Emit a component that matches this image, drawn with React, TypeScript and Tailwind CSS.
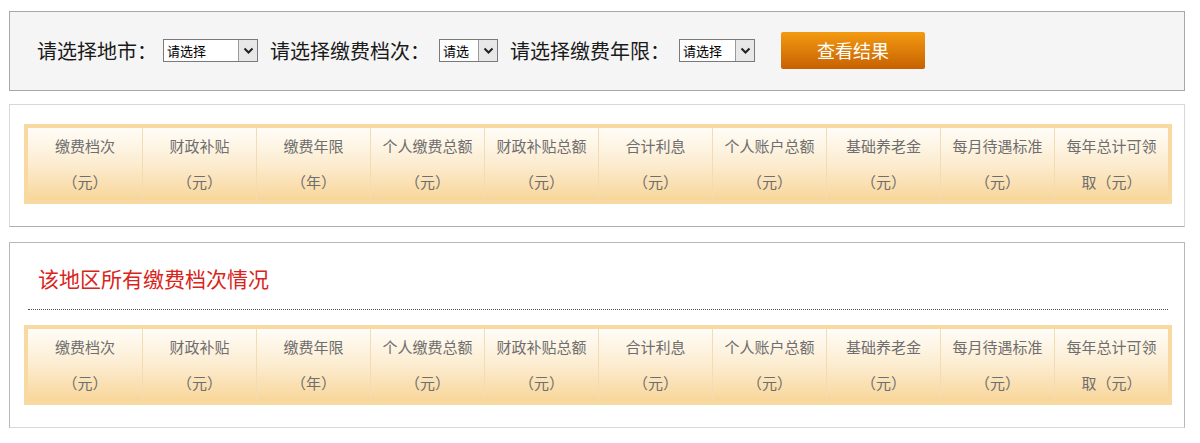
import React from "react";

const font = { fontFamily: '"Noto Sans CJK SC", "Noto Sans", sans-serif' };

function FakeSelect({ w, text }: { w: string; text: string }) {
  return (
    <div className={`${w} h-[23px] flex border border-[#7a7a7a] bg-white`}>
      <div className="flex-1 overflow-hidden whitespace-nowrap pl-[3px] text-[13px] leading-[21px] text-black">{text}</div>
      <div className="w-[19px] h-full border-l border-[#9a9a9a] bg-[#e8e8e8] flex items-center justify-center">
        <svg width="11" height="8" viewBox="0 0 11 8">
          <path d="M1.5 1.5 L5.5 5.5 L9.5 1.5" stroke="#222" strokeWidth="2" fill="none" />
        </svg>
      </div>
    </div>
  );
}

const cols: [string, string][] = [
  ["缴费档次", "（元）"],
  ["财政补贴", "（元）"],
  ["缴费年限", "（年）"],
  ["个人缴费总额", "（元）"],
  ["财政补贴总额", "（元）"],
  ["合计利息", "（元）"],
  ["个人账户总额", "（元）"],
  ["基础养老金", "（元）"],
  ["每月待遇标准", "（元）"],
  ["每年总计可领", "取（元）"],
];

function HeaderTable() {
  return (
    <div className="w-[1148px] border-4 border-[#f8d9a1] flex">
      {cols.map(([a, b], i) => (
        <div
          key={i}
          className={`w-[114px] h-[72px] bg-gradient-to-b from-[#fffdf8] via-[#fcecd0] to-[#f8d699] text-center text-[15px] leading-[36px] text-[#6e6e6e] ${
            i > 0 ? "border-l border-[#f3dcb4]" : ""
          }`}
        >
          <div className="whitespace-nowrap">{a}</div>
          <div className="whitespace-nowrap">{b}</div>
        </div>
      ))}
    </div>
  );
}

export default function App() {
  return (
    <div className="w-[1200px] h-[443px] bg-white overflow-hidden" style={font}>
      <div className="ml-[9px] mt-[11px] w-[1176px] h-[80px] border border-[#a8a8a8] bg-[#f5f5f5] flex items-center pl-[27px] pb-[1px]">
        <span className="text-[20px] text-[#1a1a1a] whitespace-nowrap">请选择地市：</span>
        <div className="ml-[6px]">
          <FakeSelect w="w-[95px]" text="请选择" />
        </div>
        <span className="ml-[12px] text-[20px] text-[#1a1a1a] whitespace-nowrap">请选择缴费档次：</span>
        <div className="ml-[9px]">
          <FakeSelect w="w-[59px]" text="请选" />
        </div>
        <span className="ml-[12px] text-[20px] text-[#1a1a1a] whitespace-nowrap">请选择缴费年限：</span>
        <div className="ml-[9px]">
          <FakeSelect w="w-[76px]" text="请选择" />
        </div>
        <button className="ml-[26px] w-[144px] h-[37px] rounded-[2px] bg-gradient-to-b from-[#f39a12] to-[#c76102] text-white text-[18px] leading-[37px] text-center">
          查看结果
        </button>
      </div>

      <div className="ml-[9px] mt-[13px] w-[1176px] h-[123px] border border-[#d8d8d8] border-b-[#b0b0b0] bg-white pt-[19px] pl-[14px]">
        <HeaderTable />
      </div>

      <div className="ml-[9px] mt-[15px] w-[1176px] h-[186px] border border-[#b8b8b8] border-b-[#d8d8d8] bg-white pl-[14px]">
        <div className="pl-[14px] pt-[20px] h-[66px] text-[21px] leading-[30px] text-[#d9241b]">该地区所有缴费档次情况</div>
        <div className="ml-[4px] w-[1140px] border-t border-dotted border-[#555]" />
        <div className="mt-[15px]">
          <HeaderTable />
        </div>
      </div>
    </div>
  );
}
